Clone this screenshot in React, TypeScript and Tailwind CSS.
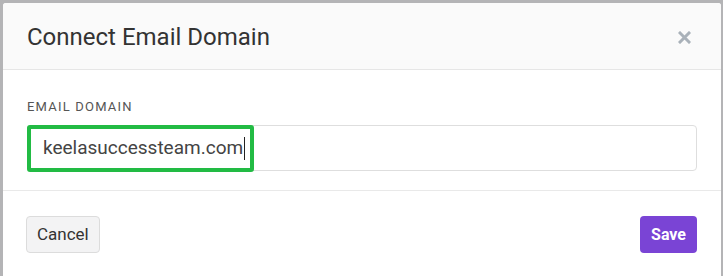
import React from "react";

export default function App() {
  return (
    <div className="w-[723px] h-[276px] bg-[#b4b4b6] pt-[3px] pl-[3px] pr-[2px] overflow-hidden font-['Roboto',sans-serif]">
      <div className="h-full bg-white rounded-t-[3px] flex flex-col">
        {/* header */}
        <div className="h-[67px] bg-[#fafafa] border-b border-[#e6e6e6] flex items-center justify-between pl-[24px] pr-[30px] rounded-t-[3px]">
          <h1 className="text-[24px] text-[#333333] leading-none mt-[2px]">Connect Email Domain</h1>
          <svg width="13" height="13" viewBox="0 0 13 13" className="mt-[2px]">
            <path d="M2 2 L11 11 M11 2 L2 11" stroke="#a9b1b9" strokeWidth="3" strokeLinecap="square" />
          </svg>
        </div>

        {/* body */}
        <div className="px-[24px] pt-[30px] pb-[19px] border-b border-[#e9e9e9]">
          <div className="text-[13px] tracking-[1.2px] text-[#555555] leading-none mb-[12px]">EMAIL DOMAIN</div>
          <div className="relative">
            <div className="h-[46px] border border-[#dedede] rounded-[4px] flex items-center pl-[15px] text-[19px] text-[#444444]">
              keelasuccessteam.com
              <span className="w-px h-[23px] bg-[#222222] ml-px" />
            </div>
            <div className="absolute left-0 top-0 w-[227px] h-[47px] border-4 border-[#22bb44] rounded-[3px]" />
          </div>
        </div>

        {/* footer */}
        <div className="flex items-center justify-between pl-[23px] pr-[24px] pt-[25px]">
          <button className="h-[37px] px-[10px] bg-[#f3f3f4] border border-[#dcdcdc] rounded-[4px] text-[17px] text-[#333333]">
            Cancel
          </button>
          <button className="h-[37px] px-[11px] bg-[#7a44d5] rounded-[4px] text-[16px] font-bold text-white">
            Save
          </button>
        </div>
      </div>
    </div>
  );
}
